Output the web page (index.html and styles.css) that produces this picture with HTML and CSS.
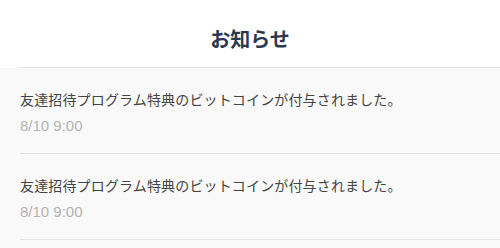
FILE: index.html
```html
<!DOCTYPE html>
<html lang="ja">
<head>
<meta charset="utf-8">
<link rel="stylesheet" href="styles.css">
</head>
<body>
<header class="header">
  <h1 class="title">お知らせ</h1>
</header>
<ul class="list">
  <li class="item">
    <p class="item-text">友達招待プログラム特典のビットコインが付与されました。</p>
    <p class="item-date">8/10 9:00</p>
  </li>
  <li class="item">
    <p class="item-text">友達招待プログラム特典のビットコインが付与されました。</p>
    <p class="item-date">8/10 9:00</p>
  </li>
</ul>
</body>
</html>
```
FILE: styles.css
```css
html, body {
  margin: 0;
  padding: 0;
  background: #f9f9f9;
  font-family: "Liberation Sans", "Noto Sans CJK JP", sans-serif;
}
.header {
  background: #ffffff;
  height: 68px;
  display: flex;
  flex-direction: column;
}
.title {
  margin: 0;
  flex: 1;
  display: flex;
  align-items: center;
  justify-content: center;
  padding-top: 10px;
  font-size: 20px;
  font-weight: bold;
  color: #2b3a50;
  font-family: "Noto Sans CJK JP", sans-serif;
}
.header::after {
  content: "";
  display: block;
  margin-left: 20px;
  height: 1px;
  background: #e3e3e3;
}
.list {
  list-style: none;
  margin: 0;
  padding: 0 0 0 20px;
}
.item {
  padding: 21px 0 17px;
  border-bottom: 1px solid #e3e3e3;
}
.item-text {
  margin: 0;
  font-size: 14px;
  line-height: 20px;
  letter-spacing: 0.15px;
  color: #444444;
  font-family: "Noto Sans CJK JP", sans-serif;
}
.item-date {
  margin: 7px 0 0;
  font-size: 15px;
  line-height: 20px;
  color: #b3b3b3;
}
```
